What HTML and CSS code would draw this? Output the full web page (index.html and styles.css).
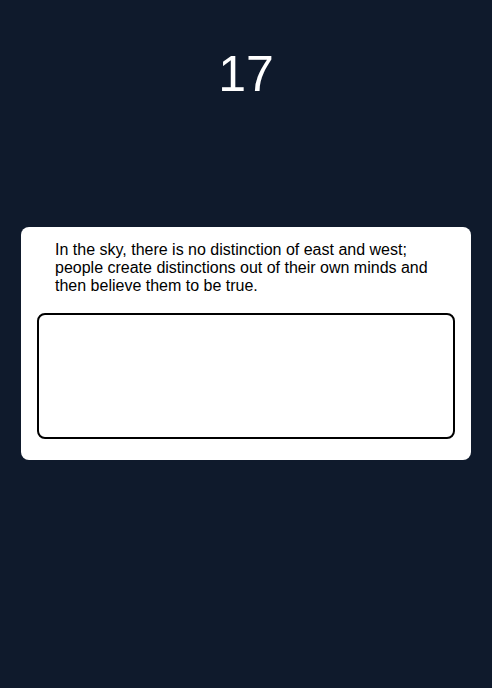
FILE: index.html
```html
<!DOCTYPE html>
<html lang="en">
<head>
<meta charset="utf-8">
<title>17</title>
<link rel="stylesheet" href="styles.css">
</head>
<body>
<main class="page">
  <header class="counter">17</header>
  <section class="card">
    <p class="quote">In the sky, there is no distinction of east and west; people create distinctions out of their own minds and then believe them to be true.</p>
    <textarea class="answer" aria-label="Your answer"></textarea>
  </section>
  <div class="spacer"></div>
</main>
</body>
</html>
```
FILE: styles.css
```css
html, body {
  margin: 0;
  padding: 0;
  background: #0f1a2c;
}
body {
  font-family: "Liberation Sans", Arial, sans-serif;
}
.page {
  height: 100vh;
  display: grid;
  grid-template-rows: 1fr auto 1fr;
  justify-items: center;
}
.counter {
  align-self: start;
  padding-top: 49px;
  font-size: 50px;
  line-height: 1;
  color: #ffffff;
}
.card {
  box-sizing: border-box;
  width: 450px;
  margin-bottom: 2px;
  background: #ffffff;
  border-radius: 8px;
  padding: 14px 16px 21px;
  display: flex;
  flex-direction: column;
  gap: 18px;
}
.quote {
  margin: 0;
  padding: 0 18px;
  font-size: 16px;
  line-height: normal;
  color: #000000;
}
.answer {
  box-sizing: border-box;
  display: block;
  width: 100%;
  height: 126px;
  border: 2px solid #000000;
  border-radius: 8px;
  resize: none;
  outline: none;
  background: #ffffff;
  font-family: "Liberation Sans", Arial, sans-serif;
  font-size: 16px;
}
```
